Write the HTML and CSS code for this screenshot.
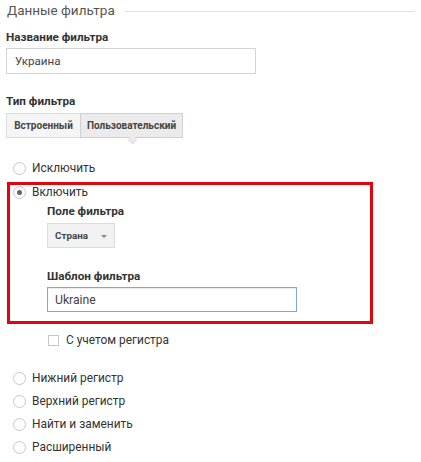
FILE: index.html
```html
<!DOCTYPE html>
<html lang="ru">
<head>
<meta charset="utf-8">
<title>Данные фильтра</title>
<link rel="stylesheet" href="styles.css">
</head>
<body>
<div class="page">
  <div class="section-head">
    <span class="section-title">Данные фильтра</span>
    <span class="section-rule"></span>
  </div>

  <div class="label label-first">Название фильтра</div>
  <div class="input input-name">Украина</div>

  <div class="label label-type">Тип фильтра</div>
  <div class="tabs">
    <div class="tab tab-builtin">Встроенный</div>
    <div class="tab tab-custom is-active">Пользовательский</div>
  </div>

  <div class="radio-row row-exclude">
    <span class="radio"></span>
    <span class="radio-text">Исключить</span>
  </div>

  <div class="highlight">
    <div class="radio-row row-include">
      <span class="radio is-checked"></span>
      <span class="radio-text">Включить</span>
    </div>
    <div class="sub">
      <div class="label label-field">Поле фильтра</div>
      <div class="dropdown">
        <span class="dropdown-text">Страна</span>
        <span class="dropdown-arrow"></span>
      </div>
      <div class="label label-pattern">Шаблон фильтра</div>
      <div class="input input-pattern">Ukraine</div>
    </div>
  </div>

  <div class="check-row">
    <span class="checkbox"></span>
    <span class="radio-text">С учетом регистра</span>
  </div>

  <div class="radio-list">
    <div class="radio-row"><span class="radio"></span><span class="radio-text">Нижний регистр</span></div>
    <div class="radio-row"><span class="radio"></span><span class="radio-text">Верхний регистр</span></div>
    <div class="radio-row"><span class="radio"></span><span class="radio-text">Найти и заменить</span></div>
    <div class="radio-row"><span class="radio"></span><span class="radio-text">Расширенный</span></div>
  </div>
</div>
</body>
</html>
```

FILE: styles.css
```css
html, body {
  margin: 0;
  padding: 0;
  background: #ffffff;
}

body {
  font-family: Roboto, "Liberation Sans", Arial, sans-serif;
  color: #333333;
}

.page {
  padding: 0 0 0 6px;
  width: 415px;
  box-sizing: border-box;
}

.section-head {
  display: flex;
  align-items: center;
  height: 20px;
}

.section-title {
  font-size: 13.5px;
  line-height: 20px;
  color: #555555;
  padding-left: 1px;
}

.section-rule {
  flex: 1;
  height: 0;
  border-top: 1px solid #e3e3e3;
  margin-left: 10px;
  margin-top: 3px;
}

.label {
  font-size: 11.7px;
  line-height: 16px;
  font-weight: bold;
  color: #333333;
}

.label-first { margin-top: 9px; }
.label-type { margin-top: 19px; }

.input {
  box-sizing: border-box;
  border: 1px solid #d4d4d4;
  font-size: 11.6px;
  color: #444444;
  display: flex;
  align-items: center;
}

.input-name {
  margin-top: 3px;
  width: 250px;
  height: 26px;
  padding-left: 8px;
}

.tabs {
  display: flex;
  margin-top: 4px;
  height: 25px;
}

.tab {
  position: relative;
  box-sizing: border-box;
  height: 25px;
  font-size: 10px;
  font-weight: bold;
  color: #444444;
  display: flex;
  align-items: center;
  justify-content: center;
  border: 1px solid #dcdcdc;
  background: #f5f5f5;
}

.tab-builtin {
  width: 74px;
  border-right: none;
}

.tab-custom {
  width: 103px;
}

.tab.is-active {
  background: #ebebeb;
  border-color: #d0d0d0;
}

.tab.is-active::after {
  content: "";
  position: absolute;
  left: 50%;
  bottom: -7px;
  width: 8px;
  height: 8px;
  margin-left: -4px;
  background: #ebebeb;
  border-right: 1px solid #d6d6d6;
  border-bottom: 1px solid #d6d6d6;
  transform: rotate(45deg) scale(0.75, 0.75);
}

.radio-row {
  display: flex;
  align-items: center;
  height: 20px;
  margin-left: 7px;
}

.row-exclude { margin-top: 20px; }

.radio {
  box-sizing: border-box;
  width: 13px;
  height: 13px;
  border: 1px solid #c8c8c8;
  border-radius: 50%;
  background: #ffffff;
  flex: none;
  display: flex;
  align-items: center;
  justify-content: center;
}

.radio.is-checked::after {
  content: "";
  width: 5px;
  height: 5px;
  border-radius: 50%;
  background: #666666;
}

.radio-text {
  font-size: 11.9px;
  color: #333333;
  margin-left: 6px;
  line-height: 20px;
}

.highlight {
  margin-top: 4px;
  margin-left: 1px;
  width: 366px;
  box-sizing: border-box;
  border: 3px solid #e0060f;
  padding: 0 0 9px 3px;
}

.highlight .radio-row {
  margin-left: 0;
}

.row-include {
  height: 14px;
}

.row-include .radio-text {
  line-height: 14px;
}

.sub {
  margin-left: 34px;
}

.label-field { margin-top: 4px; }

.dropdown {
  margin-top: 4px;
  box-sizing: border-box;
  width: 68px;
  height: 25px;
  background: #f2f2f2;
  border: 1px solid #dcdcdc;
  display: flex;
  align-items: center;
  padding-left: 7px;
}

.dropdown-text {
  font-size: 9.8px;
  font-weight: bold;
  color: #444444;
}

.dropdown-arrow {
  width: 0;
  height: 0;
  margin-left: 13px;
  margin-top: 2px;
  border-left: 3px solid transparent;
  border-right: 3px solid transparent;
  border-top: 3px solid #888888;
}

.label-pattern { margin-top: 20px; }

.input-pattern {
  margin-top: 3px;
  width: 250px;
  height: 25px;
  padding-left: 7px;
  font-size: 12.2px;
  border-color: #7fa6de;
  box-shadow: inset 0 1px 1px rgba(0, 0, 0, 0.08);
}

.check-row {
  display: flex;
  align-items: center;
  height: 20px;
  margin-top: 6px;
  margin-left: 42px;
}

.checkbox {
  box-sizing: border-box;
  width: 11px;
  height: 11px;
  border: 1px solid #c6c6c6;
  background: #ffffff;
  flex: none;
}

.check-row .radio-text {
  margin-left: 7px;
}

.radio-list {
  margin-top: 18px;
  display: flex;
  flex-direction: column;
  gap: 3px;
}
```
